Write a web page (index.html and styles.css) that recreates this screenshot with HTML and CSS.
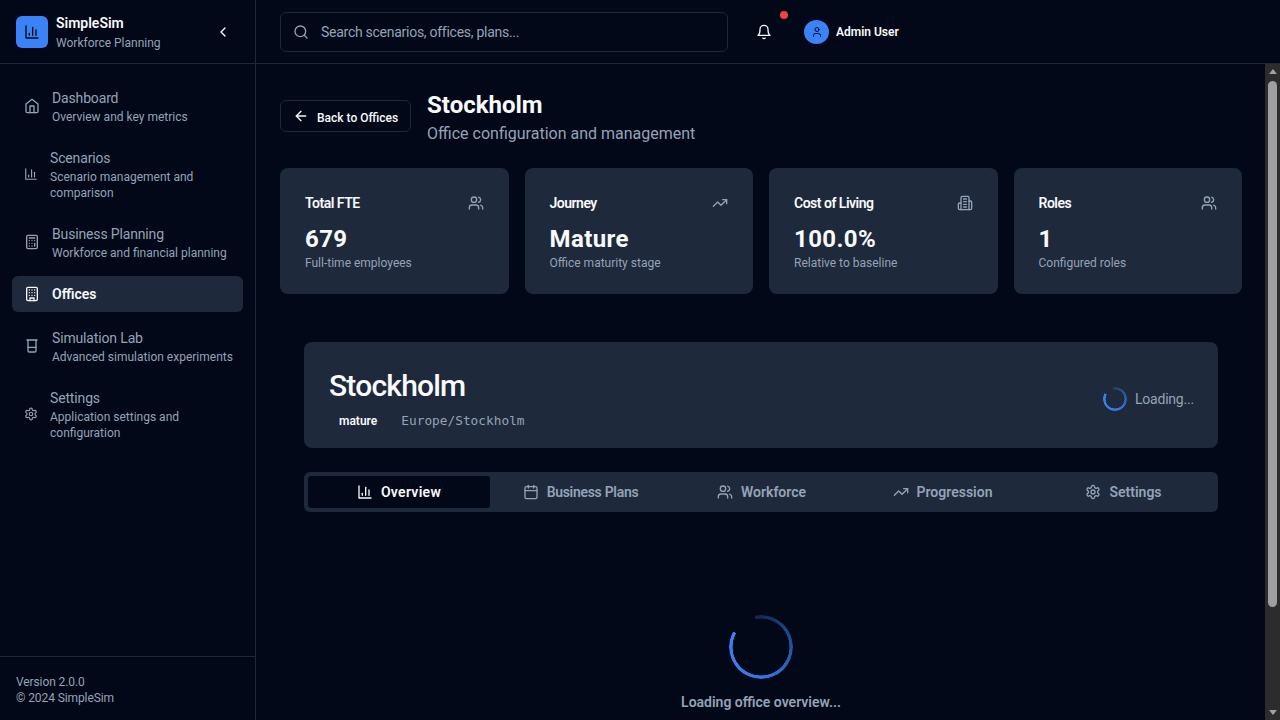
FILE: index.html
```html
<!DOCTYPE html>
<html lang="en">
<head>
<meta charset="utf-8">
<title>SimpleSim - Stockholm</title>
<link rel="stylesheet" href="styles.css">
</head>
<body>
<svg class="sprite" xmlns="http://www.w3.org/2000/svg">
  <symbol id="i-chart" viewBox="0 0 24 24"><path d="M3 3v18h18"/><path d="M18 17V9"/><path d="M13 17V5"/><path d="M8 17v-3"/></symbol>
  <symbol id="i-home" viewBox="0 0 24 24"><path d="m3 9 9-7 9 7v11a2 2 0 0 1-2 2H5a2 2 0 0 1-2-2z"/><polyline points="9 22 9 12 15 12 15 22"/></symbol>
  <symbol id="i-calc" viewBox="0 0 24 24"><rect x="4" y="2" width="16" height="20" rx="2"/><line x1="8" x2="16" y1="6" y2="6"/><line x1="16" x2="16" y1="14" y2="18"/><path d="M16 10h.01M12 10h.01M8 10h.01M12 14h.01M8 14h.01M12 18h.01M8 18h.01"/></symbol>
  <symbol id="i-building" viewBox="0 0 24 24"><rect x="4" y="2" width="16" height="20" rx="2"/><path d="M9 22v-4h6v4"/><path d="M8 6h.01M16 6h.01M12 6h.01M12 10h.01M12 14h.01M16 10h.01M16 14h.01M8 10h.01M8 14h.01"/></symbol>
  <symbol id="i-beaker" viewBox="0 0 24 24"><path d="M4.5 3h15"/><path d="M6 3v16a2 2 0 0 0 2 2h8a2 2 0 0 0 2-2V3"/><path d="M6 14h12"/></symbol>
  <symbol id="i-gear" viewBox="0 0 24 24"><path d="M12.22 2h-.44a2 2 0 0 0-2 2v.18a2 2 0 0 1-1 1.73l-.43.25a2 2 0 0 1-2 0l-.15-.08a2 2 0 0 0-2.73.73l-.22.38a2 2 0 0 0 .73 2.73l.15.1a2 2 0 0 1 1 1.72v.51a2 2 0 0 1-1 1.74l-.15.09a2 2 0 0 0-.73 2.73l.22.38a2 2 0 0 0 2.73.73l.15-.08a2 2 0 0 1 2 0l.43.25a2 2 0 0 1 1 1.73V20a2 2 0 0 0 2 2h.44a2 2 0 0 0 2-2v-.18a2 2 0 0 1 1-1.73l.43-.25a2 2 0 0 1 2 0l.15.08a2 2 0 0 0 2.73-.73l.22-.39a2 2 0 0 0-.73-2.73l-.15-.08a2 2 0 0 1-1-1.74v-.5a2 2 0 0 1 1-1.74l.15-.09a2 2 0 0 0 .73-2.73l-.22-.38a2 2 0 0 0-2.73-.73l-.15.08a2 2 0 0 1-2 0l-.43-.25a2 2 0 0 1-1-1.73V4a2 2 0 0 0-2-2z"/><circle cx="12" cy="12" r="3"/></symbol>
  <symbol id="i-users" viewBox="0 0 24 24"><path d="M16 21v-2a4 4 0 0 0-4-4H6a4 4 0 0 0-4 4v2"/><circle cx="9" cy="7" r="4"/><path d="M22 21v-2a4 4 0 0 0-3-3.87"/><path d="M16 3.13a4 4 0 0 1 0 7.75"/></symbol>
  <symbol id="i-trend" viewBox="0 0 24 24"><polyline points="22 7 13.5 15.5 8.5 10.5 2 17"/><polyline points="16 7 22 7 22 13"/></symbol>
  <symbol id="i-building2" viewBox="0 0 24 24"><path d="M6 22V4a2 2 0 0 1 2-2h8a2 2 0 0 1 2 2v18Z"/><path d="M6 12H4a2 2 0 0 0-2 2v6a2 2 0 0 0 2 2h2"/><path d="M18 9h2a2 2 0 0 1 2 2v9a2 2 0 0 1-2 2h-2"/><path d="M10 6h4M10 10h4M10 14h4M10 18h4"/></symbol>
  <symbol id="i-search" viewBox="0 0 24 24"><circle cx="11" cy="11" r="8"/><path d="m21 21-4.3-4.3"/></symbol>
  <symbol id="i-bell" viewBox="0 0 24 24"><path d="M6 8a6 6 0 0 1 12 0c0 7 3 9 3 9H3s3-2 3-9"/><path d="M10.3 21a1.94 1.94 0 0 0 3.4 0"/></symbol>
  <symbol id="i-user" viewBox="0 0 24 24"><path d="M19 21v-2a4 4 0 0 0-4-4H9a4 4 0 0 0-4 4v2"/><circle cx="12" cy="7" r="4"/></symbol>
  <symbol id="i-back" viewBox="0 0 24 24"><path d="m12 19-7-7 7-7"/><path d="M19 12H5"/></symbol>
  <symbol id="i-chevron" viewBox="0 0 24 24"><path d="m15 18-6-6 6-6"/></symbol>
  <symbol id="i-calendar" viewBox="0 0 24 24"><rect x="3" y="4" width="18" height="18" rx="2"/><line x1="16" x2="16" y1="2" y2="6"/><line x1="8" x2="8" y1="2" y2="6"/><line x1="3" x2="21" y1="10" y2="10"/></symbol>
</svg>

<div class="app">
  <aside class="sidebar">
    <div class="brand">
      <div class="logo"><svg class="icon"><use href="#i-chart"/></svg></div>
      <div class="brand-text">
        <div class="brand-name">SimpleSim</div>
        <div class="brand-sub">Workforce Planning</div>
      </div>
      <svg class="icon collapse"><use href="#i-chevron"/></svg>
    </div>
    <nav class="nav">
      <a class="nav-item"><svg class="icon"><use href="#i-home"/></svg><span class="nav-text"><span class="nav-label">Dashboard</span><span class="nav-desc">Overview and key metrics</span></span></a>
      <a class="nav-item nav-item-wrap"><svg class="icon"><use href="#i-chart"/></svg><span class="nav-text"><span class="nav-label">Scenarios</span><span class="nav-desc">Scenario management and comparison</span></span></a>
      <a class="nav-item"><svg class="icon"><use href="#i-calc"/></svg><span class="nav-text"><span class="nav-label">Business Planning</span><span class="nav-desc">Workforce and financial planning</span></span></a>
      <a class="nav-item active"><svg class="icon"><use href="#i-building"/></svg><span class="nav-text"><span class="nav-label">Offices</span></span></a>
      <a class="nav-item"><svg class="icon"><use href="#i-beaker"/></svg><span class="nav-text"><span class="nav-label">Simulation Lab</span><span class="nav-desc">Advanced simulation experiments</span></span></a>
      <a class="nav-item nav-item-wrap"><svg class="icon"><use href="#i-gear"/></svg><span class="nav-text"><span class="nav-label">Settings</span><span class="nav-desc">Application settings and configuration</span></span></a>
    </nav>
    <div class="side-foot">
      <div>Version 2.0.0</div>
      <div>© 2024 SimpleSim</div>
    </div>
  </aside>

  <div class="content">
    <header class="topbar">
      <div class="search"><svg class="icon"><use href="#i-search"/></svg><span class="search-text">Search scenarios, offices, plans...</span></div>
      <div class="bell"><svg class="icon"><use href="#i-bell"/></svg><span class="dot"></span></div>
      <div class="user"><span class="avatar"><svg class="icon-xs"><use href="#i-user"/></svg></span><span class="user-name">Admin User</span></div>
    </header>

    <div class="body-row">
      <main class="main">
        <div class="page-head">
          <button class="back"><svg class="icon"><use href="#i-back"/></svg><span class="back-text">Back to Offices</span></button>
          <div class="page-titles">
            <h1 class="page-title">Stockholm</h1>
            <p class="page-sub">Office configuration and management</p>
          </div>
        </div>

        <section class="stats">
          <div class="card"><div class="card-top"><span class="card-title">Total FTE</span><svg class="icon"><use href="#i-users"/></svg></div><div class="card-value">679</div><div class="card-desc">Full-time employees</div></div>
          <div class="card"><div class="card-top"><span class="card-title">Journey</span><svg class="icon"><use href="#i-trend"/></svg></div><div class="card-value">Mature</div><div class="card-desc">Office maturity stage</div></div>
          <div class="card"><div class="card-top"><span class="card-title">Cost of Living</span><svg class="icon"><use href="#i-building2"/></svg></div><div class="card-value">100.0%</div><div class="card-desc">Relative to baseline</div></div>
          <div class="card"><div class="card-top"><span class="card-title">Roles</span><svg class="icon"><use href="#i-users"/></svg></div><div class="card-value">1</div><div class="card-desc">Configured roles</div></div>
        </section>

        <section class="office">
          <div class="panel">
            <div>
              <h2 class="panel-title">Stockholm</h2>
              <div class="panel-meta"><span class="badge">mature</span><span class="tz">Europe/Stockholm</span></div>
            </div>
            <div class="panel-status"><span class="spinner spinner-sm"></span><span class="status-text">Loading...</span></div>
          </div>

          <div class="tabs">
            <div class="tab active"><svg class="icon"><use href="#i-chart"/></svg>Overview</div>
            <div class="tab tab-narrow"><svg class="icon"><use href="#i-calendar"/></svg>Business Plans</div>
            <div class="tab"><svg class="icon"><use href="#i-users"/></svg>Workforce</div>
            <div class="tab"><svg class="icon"><use href="#i-trend"/></svg>Progression</div>
            <div class="tab"><svg class="icon"><use href="#i-gear"/></svg>Settings</div>
          </div>

          <div class="loader">
            <span class="spinner spinner-lg"></span>
            <p class="loader-text">Loading office overview...</p>
          </div>
        </section>
      </main>
      <div class="scrollbar">
        <span class="sb-arrow sb-up"></span>
        <span class="sb-track"><span class="sb-thumb"></span></span>
        <span class="sb-arrow sb-down"></span>
      </div>
    </div>
  </div>
</div>
</body>
</html>
```

FILE: styles.css
```css
* { box-sizing: border-box; }

html, body {
  margin: 0;
  height: 100%;
  overflow: hidden;
}

body {
  background: #020817;
  color: #f8fafc;
  font-family: Roboto, "Liberation Sans", sans-serif;
  font-size: 14px;
  line-height: 20px;
}

.sprite { display: none; }

.icon, .icon-xs {
  fill: none;
  stroke: currentColor;
  stroke-width: 2;
  stroke-linecap: round;
  stroke-linejoin: round;
  flex-shrink: 0;
}
.icon { width: 16px; height: 16px; }
.icon-xs { width: 12px; height: 12px; }

.app { display: flex; height: 720px; }

/* Sidebar */
.sidebar {
  width: 256px;
  flex: none;
  display: flex;
  flex-direction: column;
  border-right: 1px solid #1e293b;
}

.brand {
  height: 64px;
  flex: none;
  display: flex;
  align-items: center;
  gap: 8px;
  padding: 0 24px 0 16px;
  border-bottom: 1px solid #1e293b;
}
.logo {
  width: 32px;
  height: 32px;
  flex: none;
  border-radius: 6px;
  background: #3b82f6;
  color: #020817;
  display: flex;
  align-items: center;
  justify-content: center;
}
.brand-text { flex: 1; }
.brand-name { font-weight: 600; color: #f8fafc; }
.brand-sub { font-size: 12px; line-height: 16px; margin-top: 2px; color: #94a3b8; }
.collapse { color: #f8fafc; flex: none; }

.nav {
  flex: 1;
  display: flex;
  flex-direction: column;
  gap: 8px;
  padding: 16px 12px;
}
.nav-item {
  display: flex;
  align-items: center;
  gap: 12px;
  padding: 8px 12px;
  border-radius: 6px;
  color: #94a3b8;
}
.nav-text { display: flex; flex-direction: column; }
.nav-label { font-size: 14px; line-height: 20px; letter-spacing: -0.15px; }
.nav-desc { font-size: 12px; line-height: 16px; margin: 1px 0 -1px; white-space: nowrap; }
.nav-item-wrap .icon { width: 14px; }
.nav-item-wrap .nav-desc { white-space: normal; }
.nav-item.active { background: #1e293b; color: #f8fafc; }
.nav-item.active .nav-label { font-weight: 600; letter-spacing: 0; }

.side-foot {
  flex: none;
  padding: 17px 16px 0;
  border-top: 1px solid #1e293b;
  font-size: 12px;
  line-height: 16px;
  letter-spacing: -0.1px;
  color: #94a3b8;
  height: 64px;
}

/* Right column */
.content {
  flex: 1;
  min-width: 0;
  display: flex;
  flex-direction: column;
}

.topbar {
  height: 64px;
  flex: none;
  display: flex;
  align-items: center;
  padding: 0 24px;
  border-bottom: 1px solid #1e293b;
}
.search {
  width: 448px;
  height: 40px;
  display: flex;
  align-items: center;
  gap: 12px;
  padding: 0 12px;
  border: 1px solid #1e293b;
  border-radius: 6px;
  color: #94a3b8;
}
.search-text { letter-spacing: -0.27px; }
.bell {
  position: relative;
  width: 16px;
  height: 16px;
  margin-left: 28px;
  display: flex;
  color: #f8fafc;
}
.dot {
  position: absolute;
  top: -13px;
  left: 24px;
  width: 8px;
  height: 8px;
  border-radius: 50%;
  background: #ef4444;
}
.user {
  display: flex;
  align-items: center;
  gap: 7px;
  margin-left: 32px;
}
.avatar {
  width: 25px;
  height: 24px;
  border-radius: 50%;
  background: #3b82f6;
  color: #020817;
  display: flex;
  align-items: center;
  justify-content: center;
}
.user-name { font-size: 12px; font-weight: 600; color: #f8fafc; }

.body-row {
  flex: 1;
  min-height: 0;
  display: flex;
}

.main {
  flex: 1;
  min-width: 0;
  overflow: hidden;
  padding: 24px 23px 24px 24px;
}

/* Window scrollbar */
.scrollbar {
  width: 15px;
  flex: none;
  display: flex;
  flex-direction: column;
  background: #2c2c2c;
}
.sb-arrow {
  height: 15px;
  flex: none;
  display: flex;
  align-items: center;
  justify-content: center;
}
.sb-arrow::before {
  content: "";
  border-left: 4px solid transparent;
  border-right: 4px solid transparent;
}
.sb-up::before { border-bottom: 5px solid #a0a0a0; }
.sb-down::before { border-top: 5px solid #a0a0a0; }
.sb-track {
  flex: 1;
  padding: 2px 3px 0;
}
.sb-thumb {
  display: block;
  height: 526px;
  border-radius: 5px;
  background: #9f9f9f;
}

.page-head {
  height: 56px;
  display: flex;
  align-items: center;
  gap: 16px;
  margin-bottom: 24px;
}
.back {
  height: 32px;
  display: flex;
  align-items: center;
  gap: 8px;
  padding: 0 12px;
  background: transparent;
  color: #f8fafc;
  border: 1px solid #1e293b;
  border-radius: 6px;
  font: 500 12px/16px Roboto, "Liberation Sans", sans-serif;
}
.back-text { margin-top: 3px; }
.page-titles { align-self: flex-start; padding-top: 1px; }
.page-title { margin: 0; font-size: 24px; line-height: 32px; font-weight: 700; color: #f8fafc; }
.page-sub { margin: 1px 0 0; font-size: 16px; line-height: 24px; color: #94a3b8; }

.stats {
  display: grid;
  grid-template-columns: repeat(4, 1fr);
  gap: 16px;
  margin-bottom: 24px;
}
.card {
  height: 126px;
  padding: 25px;
  background: #1e293b;
  border-radius: 8px;
}
.card-top {
  display: flex;
  align-items: center;
  justify-content: space-between;
  color: #94a3b8;
}
.card-title { font-weight: 600; letter-spacing: -0.5px; color: #f8fafc; }
.card-value {
  margin-top: 10px;
  font-size: 24px;
  line-height: 32px;
  font-weight: 700;
  letter-spacing: 0.4px;
  color: #f8fafc;
}
.card-desc { font-size: 12px; line-height: 16px; color: #94a3b8; }

.office { padding: 24px; }

.panel {
  height: 106px;
  display: flex;
  align-items: center;
  justify-content: space-between;
  padding: 23px 24px 16px 25px;
  background: #1e293b;
  border-radius: 8px;
  margin-bottom: 24px;
}
.panel-title {
  margin: 0;
  font-size: 30px;
  line-height: 38px;
  font-weight: 500;
  letter-spacing: -0.8px;
  color: #f8fafc;
}
.panel-meta {
  display: flex;
  align-items: center;
  gap: 14px;
  margin-top: 6px;
}
.badge {
  padding: 2px 10px;
  font-size: 12px;
  line-height: 16px;
  font-weight: 600;
  color: #f8fafc;
}
.tz {
  font-family: "DejaVu Sans Mono", monospace;
  font-size: 12.8px;
  color: #94a3b8;
}
.panel-status {
  display: flex;
  align-items: center;
  gap: 8px;
  color: #94a3b8;
}
.status-text { letter-spacing: -0.2px; }

.spinner {
  display: block;
  border-radius: 50%;
  background: conic-gradient(from 349deg, rgba(59,130,246,0.25) 0deg, rgba(59,130,246,0.9) 180deg, #3b82f6 310deg, transparent 310deg);
}
.spinner-sm {
  width: 24px;
  height: 24px;
  -webkit-mask: radial-gradient(circle closest-side, transparent 9.2px, #000 9.7px);
  mask: radial-gradient(circle closest-side, transparent 9.2px, #000 9.7px);
}
.spinner-lg {
  width: 64px;
  height: 64px;
  -webkit-mask: radial-gradient(circle closest-side, transparent 28.2px, #000 28.7px);
  mask: radial-gradient(circle closest-side, transparent 28.2px, #000 28.7px);
}

.tabs {
  height: 40px;
  display: grid;
  grid-template-columns: 182px repeat(4, 1fr);
  padding: 4px;
  background: #1e293b;
  border-radius: 6px;
}
.tab {
  display: flex;
  align-items: center;
  justify-content: center;
  gap: 8px;
  border-radius: 3px;
  font-weight: 600;
  color: #94a3b8;
}
.tab.active { background: #020817; color: #f8fafc; letter-spacing: 0.3px; }
.tab-narrow { letter-spacing: -0.3px; }

.loader {
  display: flex;
  flex-direction: column;
  align-items: center;
  padding: 103px 0 80px;
}
.loader-text {
  margin: 13px 0 0;
  font-weight: 600;
  color: #94a3b8;
}
```
